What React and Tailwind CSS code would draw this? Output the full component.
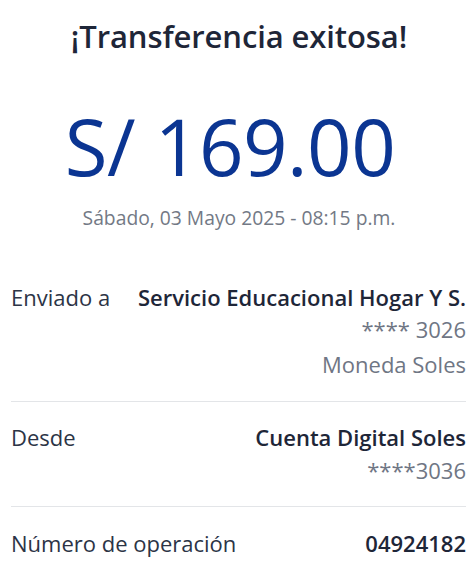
export default function App() {
  return (
    <div className="w-[474px] h-[569px] bg-white overflow-hidden font-['Open_Sans',sans-serif]">
      <div className="pt-[14px] pl-[4px] text-center text-[31px] leading-[44px] font-semibold text-[#1e2638] tracking-[-0.1px]">
        ¡Transferencia exitosa!
      </div>
      <div className="mt-[43px] pr-[14px] text-center text-[78px] leading-[90px] text-[#0b3592] tracking-[-0.5px]">
        S/ 169.00
      </div>
      <div className="mt-[15px] pl-[4px] text-center text-[19.3px] leading-[24px] text-[#737985]">
        Sábado, 03 Mayo 2025 - 08:15 p.m.
      </div>

      <div className="mt-[51px] pl-[11px] pr-[8px] text-[22px]">
        <div className="flex justify-between leading-[32px]">
          <span className="text-[#2c3446] whitespace-nowrap">Enviado a</span>
          <span className="font-semibold text-[#1e2638] whitespace-nowrap">Servicio Educacional Hogar Y S.</span>
        </div>
        <div className="text-right leading-[33px] text-[#6f7684]">**** 3026</div>
        <div className="text-right leading-[36px] text-[#6f7684]">Moneda Soles</div>
        <div className="mt-[19px] border-t border-[#e3e5e8]" />

        <div className="mt-[19px] flex justify-between leading-[32px]">
          <span className="text-[#2c3446]">Desde</span>
          <span className="font-semibold text-[#1e2638]">Cuenta Digital Soles</span>
        </div>
        <div className="text-right leading-[34px] text-[#6f7684]">****3036</div>
        <div className="mt-[19px] border-t border-[#e3e5e8]" />

        <div className="mt-[20px] flex justify-between leading-[32px]">
          <span className="text-[#2c3446]">Número de operación</span>
          <span className="font-semibold text-[#1e2638]">04924182</span>
        </div>
      </div>
    </div>
  );
}
